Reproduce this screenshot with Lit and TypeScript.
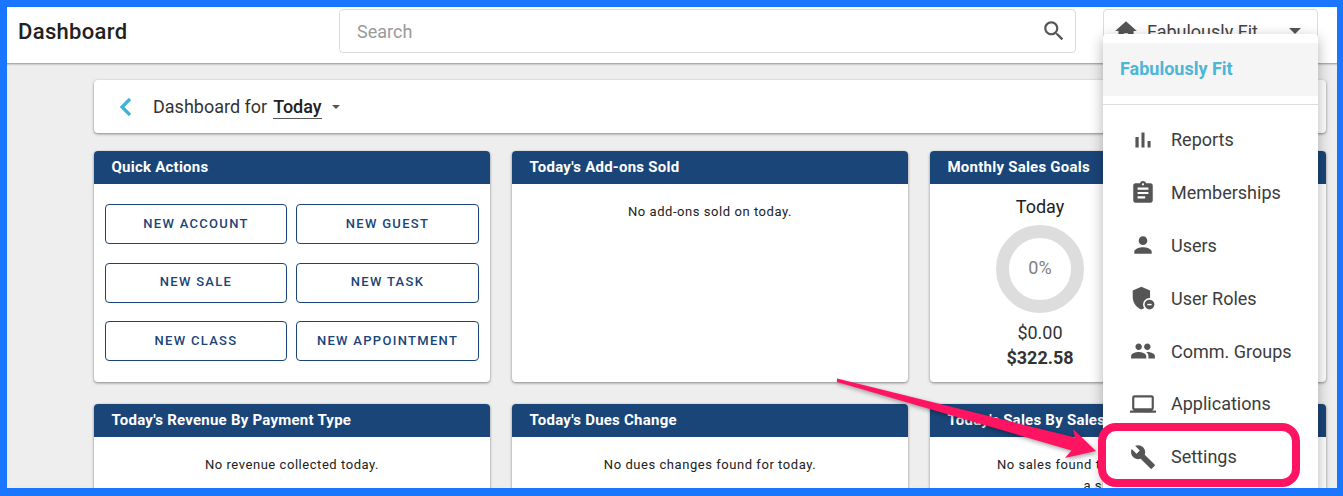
import { LitElement, html, css, svg } from "lit";
import { customElement } from "lit/decorators.js";

const ICONS: Record<string, unknown> = {
  reports: svg`<path d="M5 9.2h3V19H5zM10.6 5h2.8v14h-2.8zm5.6 8H19v6h-2.8z"/>`,
  memberships: svg`<path d="M19 3h-4.18C14.4 1.84 13.3 1 12 1c-1.3 0-2.4.84-2.82 2H5c-1.1 0-2 .9-2 2v14c0 1.1.9 2 2 2h14c1.1 0 2-.9 2-2V5c0-1.1-.9-2-2-2zm-7 0c.55 0 1 .45 1 1s-.45 1-1 1-1-.45-1-1 .45-1 1-1zm2 14H7v-2h7v2zm3-4H7v-2h10v2zm0-4H7V7h10v2z"/>`,
  users: svg`<path d="M12 12c2.21 0 4-1.79 4-4s-1.79-4-4-4-4 1.79-4 4 1.79 4 4 4zm0 2c-2.67 0-8 1.34-8 4v2h16v-2c0-2.66-5.33-4-8-4z"/>`,
  roles: svg`<path d="M10.500 1.500 2.500 5v6c0 5.300 3.400 9.800 8 11.500 4.600-1.700 8-6.200 8-11.500V5z"/><circle cx="18" cy="18" r="6" fill="#fff"/><circle cx="18" cy="18" r="4.500"/><path d="M16 17.400h4v1.300h-4z" fill="#fff"/>`,
  groups: svg`<path d="M16 11c1.66 0 2.99-1.34 2.99-3S17.66 5 16 5c-1.66 0-3 1.34-3 3s1.34 3 3 3zm-8 0c1.66 0 2.99-1.34 2.99-3S9.66 5 8 5C6.34 5 5 6.34 5 8s1.34 3 3 3zm0 2c-2.33 0-7 1.17-7 3.500V19h14v-2.500c0-2.330-4.670-3.500-7-3.500zm8 0c-.29 0-.62.02-.97.05 1.160.84 1.970 1.970 1.970 3.450V19h6v-2.500c0-2.330-4.670-3.500-7-3.500z"/>`,
  apps: svg`<path d="M20 18c1.100 0 1.990-.9 1.990-2L22 6c0-1.100-.9-2-2-2H4c-1.100 0-2 .9-2 2v10c0 1.100.9 2 2 2H0v2h24v-2h-4zM4 6h16v10H4V6z"/>`,
  settings: svg`<path d="M22.700 19l-9.100-9.100c.9-2.300.4-5-1.500-6.900-2-2-5-2.400-7.400-1.300L9 6 6 9 1.600 4.700C.4 7.100.9 10.100 2.900 12.100c1.900 1.900 4.600 2.400 6.900 1.500l9.100 9.100c.4.4 1 .4 1.400 0l2.300-2.300c.5-.4.5-1.100.1-1.400z"/>`,
};

const MENU: [string, string][] = [
  ["reports", "Reports"],
  ["memberships", "Memberships"],
  ["users", "Users"],
  ["roles", "User Roles"],
  ["groups", "Comm. Groups"],
  ["apps", "Applications"],
  ["settings", "Settings"],
];

const ACTIONS = ["NEW ACCOUNT", "NEW GUEST", "NEW SALE", "NEW TASK", "NEW CLASS", "NEW APPOINTMENT"];

@customElement("app-root")
export class AppRoot extends LitElement {
  static styles = css`
    :host {
      display: block;
      position: relative;
      width: 1343px;
      height: 496px;
      overflow: hidden;
      background: #eeeeee;
      font-family: Roboto, "Liberation Sans", sans-serif;
      color: #212121;
    }
    .topbar {
      display: flex;
      height: 63px;
      box-sizing: border-box;
      padding-top: 9px;
      background: #fff;
      box-shadow: 0 1px 2px rgba(0, 0, 0, 0.4);
      position: relative;
    }
    .title {
      width: 339px;
      box-sizing: border-box;
      padding: 10px 0 0 18px;
      font-size: 22px;
      font-weight: 500;
      line-height: 26px;
      letter-spacing: 0.33px;
      color: #212121;
    }
    .search {
      width: 737px;
      height: 44px;
      box-sizing: border-box;
      display: flex;
      align-items: center;
      justify-content: space-between;
      padding: 0 8px 0 17px;
      border: 1px solid #dcdcdc;
      border-radius: 4px;
      font-size: 18px;
      color: #9a9a9a;
    }
    .search svg { width: 26px; height: 26px; fill: #555; }
    .org {
      margin-left: 27px;
      width: 215px;
      height: 44px;
      box-sizing: border-box;
      display: flex;
      align-items: center;
      gap: 8px;
      padding: 0 16px 0 9px;
      border: 1px solid #dcdcdc;
      border-radius: 4px;
      font-size: 18px;
      color: #444;
    }
    .org svg { width: 26px; height: 26px; fill: #555; flex: none; }
    .org span { flex: 1; }
    .org i {
      width: 0; height: 0;
      border-left: 6px solid transparent;
      border-right: 6px solid transparent;
      border-top: 6px solid #555;
    }
    main {
      padding: 17px 17px 0 94px;
    }
    .toolbar {
      height: 53px;
      display: flex;
      align-items: center;
      padding-left: 24px;
      background: #fff;
      border-radius: 4px;
      box-shadow: 0 1px 3px rgba(0, 0, 0, 0.45);
      font-size: 18px;
      color: #333;
    }
    .toolbar svg { width: 15px; height: 20px; margin-right: 20px; }
    .today {
      margin-left: 6px;
      font-weight: 500;
      color: #212121;
      border-bottom: 1px solid #555;
      line-height: 23px;
    }
    .toolbar i {
      margin-left: 10px;
      width: 0; height: 0;
      border-left: 4.500px solid transparent;
      border-right: 4.500px solid transparent;
      border-top: 4.500px solid #555;
    }
    .grid {
      display: grid;
      grid-template-columns: repeat(3, 396px);
      grid-template-rows: 231px 120px;
      gap: 22px;
      margin-top: 18px;
    }
    .card {
      background: #fff;
      border-radius: 4px;
      box-shadow: 0 1px 3px rgba(0, 0, 0, 0.45);
      overflow: hidden;
    }
    .card h2 {
      margin: 0;
      height: 33px;
      box-sizing: border-box;
      padding-left: 17.500px;
      background: #1a4578;
      color: #fff;
      font-size: 15px;
      font-weight: 700;
      line-height: 32px;
      letter-spacing: 0.24px;
    }
    .msg {
      margin: 0;
      padding-top: 17px;
      text-align: center;
      font-size: 13px;
      line-height: 21px;
      letter-spacing: 0.55px;
      color: #212121;
    }
    .actions {
      display: grid;
      grid-template-columns: 182px 183px;
      grid-auto-rows: 40px;
      column-gap: 9px;
      row-gap: 18.500px;
      padding: 20.200px 0 0 11px;
    }
    .actions button {
      background: #fff;
      border: 1px solid #1a4578;
      border-radius: 4px;
      padding: 0 0 2px;
      font-family: inherit;
      font-size: 13px;
      font-weight: 500;
      letter-spacing: 1.300px;
      color: #1a4578;
    }
    .goal {
      width: 220px;
      padding-top: 11px;
      display: flex;
      flex-direction: column;
      align-items: center;
      font-size: 18px;
      color: #333;
    }
    .goal .label { line-height: 24px; color: #212121; }
    .donut {
      width: 88px;
      height: 88px;
      box-sizing: border-box;
      margin-top: 6px;
      padding-bottom: 3px;
      border: 13px solid #dddddd;
      border-radius: 50%;
      display: flex;
      align-items: center;
      justify-content: center;
      font-size: 18px;
      color: #808080;
    }
    .goal .spent { margin-top: 7.500px; line-height: 24px; }
    .goal .total { margin-top: 1.500px; line-height: 24px; font-weight: 700; color: #333; }
    .menu {
      position: absolute;
      left: 1103px;
      top: 34px;
      width: 215px;
      height: 470px;
      box-sizing: border-box;
      padding-top: 9px;
      background: #fff;
      border-radius: 4px;
      box-shadow: 0 4px 14px rgba(0, 0, 0, 0.3);
    }
    .menu-head {
      height: 53px;
      box-sizing: border-box;
      padding-left: 17px;
      background: #f5f5f5;
      color: #4db6d6;
      font-size: 18px;
      font-weight: 700;
      line-height: 51px;
    }
    .menu hr {
      margin: 8px 0 8.300px;
      border: 0;
      border-top: 1px solid #dddddd;
    }
    .item {
      height: 52.830px;
      display: flex;
      align-items: center;
      gap: 15.500px;
      padding-left: 26.500px;
      font-size: 18px;
      color: #3c3c3c;
    }
    .item svg { width: 26px; height: 26px; fill: #555; flex: none; }
    .highlight {
      position: absolute;
      left: 1098px;
      top: 423px;
      width: 202px;
      height: 64px;
      box-sizing: border-box;
      border: 8px solid #ff1461;
      border-radius: 18px;
    }
    .arrow {
      position: absolute;
      left: 820px;
      top: 365px;
      width: 300px;
      height: 110px;
      filter: drop-shadow(1px 2px 2px rgba(0, 0, 0, 0.35));
    }
    .frame {
      position: absolute;
      inset: 0;
      box-sizing: border-box;
      border-style: solid;
      border-color: #1a76ff;
      border-width: 7px 6px 8px 7px;
      pointer-events: none;
    }
  `;

  private msgCard(title: string, body: unknown) {
    return html`<section class="card"><h2>${title}</h2><p class="msg">${body}</p></section>`;
  }

  render() {
    return html`
      <header class="topbar">
        <div class="title">Dashboard</div>
        <div class="search">
          <span>Search</span>
          <svg viewBox="0 0 24 24"><path d="M15.500 14h-.79l-.28-.27C15.410 12.590 16 11.110 16 9.500 16 5.910 13.090 3 9.500 3S3 5.910 3 9.500 5.910 16 9.500 16c1.610 0 3.090-.59 4.230-1.570l.27.28v.79l5 4.990L20.490 19l-4.990-5zm-6 0C7.010 14 5 11.990 5 9.500S7.010 5 9.500 5 14 7.010 14 9.500 11.990 14 9.500 14z"/></svg>
        </div>
        <div class="org">
          <svg viewBox="0 0 24 24"><path d="M10 20v-6h4v6h5v-8h3L12 3 2 12h3v8z"/></svg>
          <span>Fabulously Fit</span>
          <i></i>
        </div>
      </header>
      <main>
        <div class="toolbar">
          <svg viewBox="0 0 15 20"><path d="M12 2 4 10l8 8" fill="none" stroke="#3fb3d5" stroke-width="3.200"/></svg>
          <span>Dashboard for</span>
          <span class="today">Today</span>
          <i></i>
        </div>
        <div class="grid">
          <section class="card">
            <h2>Quick Actions</h2>
            <div class="actions">
              ${ACTIONS.map((a) => html`<button>${a}</button>`)}
            </div>
          </section>
          ${this.msgCard("Today's Add-ons Sold", "No add-ons sold on today.")}
          <section class="card">
            <h2>Monthly Sales Goals</h2>
            <div class="goal">
              <div class="label">Today</div>
              <div class="donut">0%</div>
              <div class="spent">$0.00</div>
              <div class="total">$322.58</div>
            </div>
          </section>
          ${this.msgCard("Today's Revenue By Payment Type", "No revenue collected today.")}
          ${this.msgCard("Today's Dues Change", "No dues changes found for today.")}
          ${this.msgCard("Today's Sales By Salesperson", html`No sales found today. Add more by taking<br />a single order.`)}
        </div>
      </main>
      <nav class="menu">
        <div class="menu-head">Fabulously Fit</div>
        <hr />
        ${MENU.map(
          ([k, label]) => html`<div class="item"><svg viewBox="0 0 24 24">${ICONS[k]}</svg><span>${label}</span></div>`
        )}
      </nav>
      <svg class="arrow" viewBox="820 365 300 110">
        <polygon points="837,378.500 1075,437.500 1073,429 1096,451 1065,458 1071.500,450.500 837,382" fill="#ff1461"/>
      </svg>
      <div class="highlight"></div>
      <div class="frame"></div>
    `;
  }
}
